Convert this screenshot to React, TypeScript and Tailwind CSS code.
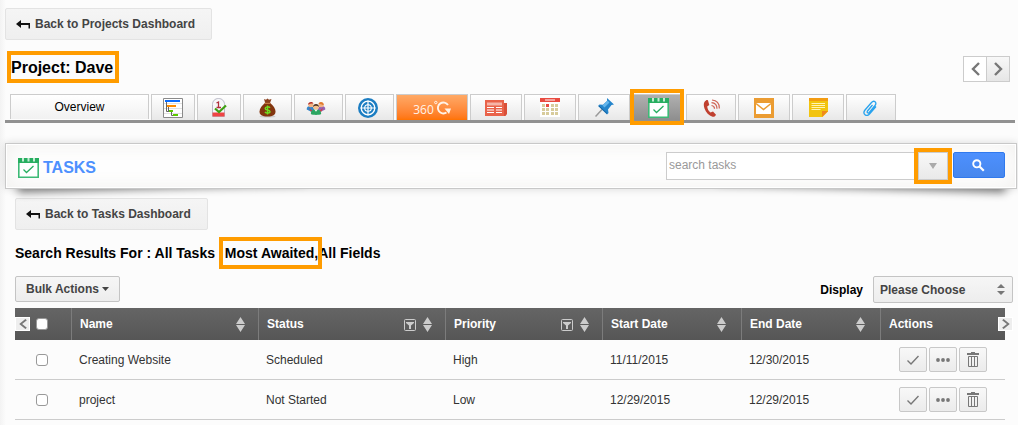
import type { ReactNode } from "react";
import { clsx } from "clsx";

type Tab = {
  label: string;
  width: string;
  icon: ReactNode;
  active?: boolean;
  orange?: boolean;
};

type Task = {
  name: string;
  status: string;
  priority: string;
  startDate: string;
  endDate: string;
};

type Column = {
  label: string;
  className: string;
  filter?: boolean;
};

const tabs: Tab[] = [
  { label: "Gantt chart", width: "w-11", icon: <GanttIcon /> },
  { label: "Milestones", width: "w-11", icon: <MilestoneIcon /> },
  { label: "Budget", width: "w-[49px]", icon: <MoneyBagIcon /> },
  { label: "People", width: "w-[49px]", icon: <PeopleIcon /> },
  { label: "Targets", width: "w-[49px]", icon: <TargetIcon /> },
  { label: "360 view", width: "w-[72px]", icon: <ThreeSixty />, orange: true },
  { label: "News", width: "w-[52px]", icon: <NewsIcon /> },
  { label: "Calendar", width: "w-[52px]", icon: <CalendarIcon /> },
  { label: "Pins", width: "w-[52px]", icon: <PinIcon /> },
  { label: "Tasks", width: "w-[52px]", icon: <TaskIcon />, active: true },
  { label: "Calls", width: "w-[50px]", icon: <PhoneIcon /> },
  { label: "Emails", width: "w-[52px]", icon: <MailIcon /> },
  { label: "Notes", width: "w-[52px]", icon: <NoteIcon /> },
  { label: "Documents", width: "w-[50px]", icon: <ClipIcon /> },
];

const columns: Column[] = [
  { label: "Name", className: "pr-[13px]" },
  { label: "Status", className: "w-[187px] pr-[13px]", filter: true },
  { label: "Priority", className: "w-[157px] pr-[13px]", filter: true },
  { label: "Start Date", className: "w-[139px] pr-[15px]" },
  { label: "End Date", className: "w-[139px] pr-[15px]" },
];

const tasks: Task[] = [
  {
    name: "Creating Website",
    status: "Scheduled",
    priority: "High",
    startDate: "11/11/2015",
    endDate: "12/30/2015",
  },
  {
    name: "project",
    status: "Not Started",
    priority: "Low",
    startDate: "12/29/2015",
    endDate: "12/29/2015",
  },
];

export default function App() {
  return (
    <main className="bg-[linear-gradient(to_right,#f3f3f3,#fcfcfc_6px)] pt-2 pb-1.5 pl-[5px] font-['Liberation_Sans',Arial,sans-serif] text-xs text-[#333]">
      <BackLink label="Back to Projects Dashboard" />

      <header className="mt-[11px] flex items-center justify-between pr-2 pl-0.5">
        <h1 className="h-8 border-4 border-[#ff9c00] pr-0.5 text-base leading-[26px] font-bold text-black">
          Project: Dave
        </h1>
        <div className="mt-1 flex h-[26px] border border-[#ccc]">
          <button
            type="button"
            aria-label="Previous project"
            className="flex w-[22px] items-center justify-center bg-white"
          >
            <Chevron />
          </button>
          <button
            type="button"
            aria-label="Next project"
            className="flex w-[23px] items-center justify-center border-l border-[#ccc] bg-linear-to-b from-[#f8f8f8] to-[#e6e6e6]"
          >
            <Chevron right />
          </button>
        </div>
      </header>

      <nav className="mt-[11px] mr-[3px] flex gap-0.5 border-b-[3px] border-[#919191] pl-[5px]">
        <a
          href="#overview"
          className="mb-px flex h-[25px] w-[139px] items-center justify-center border border-b-0 border-[#ccc] bg-linear-to-b from-white to-[#f1f1f1] text-black"
        >
          Overview
        </a>
        {tabs.map((tab) => (
          <TabLink key={tab.label} tab={tab} />
        ))}
      </nav>

      <TasksPanel />

      <div className="pt-[9px] pr-[5px] pl-2.5">
        <BackLink label="Back to Tasks Dashboard" />

        <h3 className="mt-[13px] text-sm leading-5 font-bold text-black">
          Search Results For : All Tasks{" "}
          <span className="relative ml-1.5">
            Most Awaited,
            <span className="absolute -top-2 -right-1 -bottom-2 -left-1.5 border-4 border-[#ff9c00]" />
          </span>
          All Fields
        </h3>

        <div className="mt-[13px] flex items-start justify-between">
          <button
            type="button"
            className="flex h-[26px] items-center gap-[3px] rounded-xs border border-[#c4c4c4] bg-linear-to-b from-[#f6f6f6] to-[#ededed] px-2.5 font-bold text-[#444]"
          >
            Bulk Actions
            <svg width="7" height="4" viewBox="0 0 7 4" fill="#444">
              <path d="M0 0h7L3.5 4z" />
            </svg>
          </button>
          <div className="flex items-center gap-2.5">
            <label htmlFor="display" className="font-bold text-black">
              Display
            </label>
            <div className="relative">
              <select
                id="display"
                className="block h-[27px] w-[140px] appearance-none rounded-xs border border-[#c4c4c4] bg-linear-to-b from-[#f6f6f6] to-[#ededed] px-1.5 font-bold text-[#444]"
              >
                <option>Please Choose</option>
              </select>
              <svg
                className="pointer-events-none absolute top-2 right-2"
                width="8"
                height="11"
                viewBox="0 0 8 11"
                fill="#777"
              >
                <path d="M4 0l4 4H0zM4 11L0 7h8z" />
              </svg>
            </div>
          </div>
        </div>

        <TaskTable />
      </div>
    </main>
  );
}

function BackLink({ label }: { label: string }) {
  return (
    <a
      href="#dashboard"
      className="flex h-8 w-fit items-center gap-[5px] rounded-xs border border-[#e3e3e3] bg-linear-to-b from-[#f5f5f5] to-[#efefef] pr-4 pl-2.5 font-bold text-[#444]"
    >
      <svg width="14" height="9" viewBox="0 0 14 9" fill="#111">
        <path d="M0 4L5 0v3h9v5.500h-1.500V5H5v3z" />
      </svg>
      {label}
    </a>
  );
}

function TabLink({ tab }: { tab: Tab }) {
  return (
    <a
      href="#tab"
      aria-label={tab.label}
      className={clsx(
        "relative flex h-[26px] items-center justify-center border border-b-0 border-[#ccc] bg-linear-to-b",
        tab.width,
        tab.active && "from-[#b0b0b0] to-[#8e8e8e]",
        tab.orange && "from-[#ffa965] to-[#ff7300]",
        !tab.active && !tab.orange && "from-white to-[#e8e8e8]",
      )}
    >
      {tab.icon}
      {tab.active && (
        <span className="absolute -top-1.5 -right-px -bottom-[5px] -left-[3px] border-4 border-[#ff9c00]" />
      )}
    </a>
  );
}

function TasksPanel() {
  return (
    <section className="relative isolate mt-5">
      <div className="absolute bottom-4 left-3 -z-10 h-5 w-72 -rotate-2 shadow-[0_15px_8px_#888]" />
      <div className="absolute right-3 bottom-4 -z-10 h-5 w-72 rotate-2 shadow-[0_15px_8px_#888]" />
      <div className="mr-px flex h-[46px] items-center justify-between border border-[#c8c8c8] bg-white pr-[11px] pl-3 shadow-[0_0_8px_rgba(0,0,0,0.14),inset_0_0_0_1px_#fff,inset_0_0_24px_rgba(90,80,50,0.09)]">
        <h2 className="flex items-center gap-1 pt-1 text-base font-bold text-[#4d90fe]">
          <TaskIcon />
          TASKS
        </h2>
        <form className="flex items-start gap-[5px]">
          <div className="relative flex h-7 border border-[#ccc] bg-white">
            <input
              type="text"
              aria-label="search tasks"
              placeholder="search tasks"
              className="w-[251px] px-0.5 pb-0.5 outline-none placeholder:text-[#999]"
            />
            <button
              type="button"
              aria-label="Search options"
              className="flex w-[29px] items-center justify-center border-l border-[#ccc] bg-linear-to-b from-[#f8f8f8] to-[#e9e9e9]"
            >
              <svg width="8" height="6" viewBox="0 0 8 6" fill="#aaa">
                <path d="M0 0h8L4 6z" />
              </svg>
            </button>
            <span className="pointer-events-none absolute -top-[5px] -right-[5px] -bottom-[5px] w-[38px] border-4 border-[#ff9c00]" />
          </div>
          <button
            type="button"
            aria-label="Search"
            className="flex h-[26px] w-[52px] items-center justify-center rounded-xs border border-[#3079ed] bg-linear-to-b from-[#4d90fe] to-[#4787ed] pr-0.5"
          >
            <svg width="13" height="13" viewBox="0 0 13 13" fill="none" stroke="#fff">
              <circle cx="4.800" cy="4.800" r="3.600" strokeWidth="1.900" />
              <path d="M7.500 7.500l4.300 4.300" strokeWidth="2.200" />
            </svg>
          </button>
        </form>
      </div>
    </section>
  );
}

function TaskTable() {
  return (
    <div className="relative mt-[5px] mr-2">
      <table className="w-full table-fixed border-separate border-spacing-0 text-left">
        <thead>
          <tr className="h-8 bg-linear-to-b from-[#656565] to-[#565656] text-white">
            <th className="w-14 p-0 pl-[21px]">
              <Checkbox label="Select all tasks" />
            </th>
            {columns.map((column) => (
              <th
                key={column.label}
                className={clsx("border-l border-[#7c7c7c] py-0 pl-2", column.className)}
              >
                <div className="flex items-center gap-[7px]">
                  <span className="grow">{column.label}</span>
                  {column.filter && <FilterIcon />}
                  <SortIcon />
                </div>
              </th>
            ))}
            <th className="w-[125px] border-l border-[#7c7c7c] py-0 pl-2">Actions</th>
          </tr>
        </thead>
        <tbody className="[&_td]:border-b [&_td]:border-[#ccc]">
          {tasks.map((task) => (
            <tr key={task.name} className="h-10">
              <td className="p-0 pl-[21px]">
                <Checkbox label={`Select ${task.name}`} />
              </td>
              <td className="py-0 pl-2">{task.name}</td>
              <td className="py-0 pl-2">{task.status}</td>
              <td className="py-0 pl-2">{task.priority}</td>
              <td className="py-0 pl-2">{task.startDate}</td>
              <td className="py-0 pl-2">{task.endDate}</td>
              <td className="p-0">
                <div className="flex justify-end gap-0.5 pr-[18px]">
                  <ActionButton label="Complete task">
                    <svg width="12" height="10" viewBox="0 0 12 10" fill="none" stroke="#777" strokeWidth="1.400">
                      <path d="M.5 5.500L4 9 11.500 1" />
                    </svg>
                  </ActionButton>
                  <ActionButton label="More actions">
                    <svg width="14" height="4" viewBox="0 0 14 4" fill="#777">
                      <circle cx="2" cy="2" r="1.900" />
                      <circle cx="7" cy="2" r="1.900" />
                      <circle cx="12" cy="2" r="1.900" />
                    </svg>
                  </ActionButton>
                  <ActionButton label="Delete task">
                    <svg width="12" height="15" viewBox="0 0 12 15" fill="none" stroke="#777">
                      <path d="M4 .5h4M0 2h12" strokeWidth="1.800" />
                      <path d="M1.500 4.500h9v10h-9zM4.500 4.500v10M7.500 4.500v10" />
                    </svg>
                  </ActionButton>
                </div>
              </td>
            </tr>
          ))}
        </tbody>
      </table>

      <button
        type="button"
        aria-label="Scroll left"
        className="absolute top-[9px] left-0 flex h-3.5 w-[15px] items-center justify-center border border-white bg-[#eee]"
      >
        <Chevron small />
      </button>
      <button
        type="button"
        aria-label="Scroll right"
        className="absolute top-[9px] -right-2 flex h-3.5 w-[15px] items-center justify-center border border-white bg-[#eee]"
      >
        <Chevron small right />
      </button>
    </div>
  );
}

function Checkbox({ label }: { label: string }) {
  return (
    <input
      type="checkbox"
      aria-label={label}
      className="block size-3 appearance-none rounded-[3px] border border-[#999] bg-white"
    />
  );
}

function ActionButton({ label, children }: { label: string; children: ReactNode }) {
  return (
    <button
      type="button"
      aria-label={label}
      className="flex h-[25px] w-7 items-center justify-center rounded-xs border border-[#c8c8c8] bg-linear-to-b from-[#f8f8f8] to-[#ebebeb]"
    >
      {children}
    </button>
  );
}

function Chevron({ right, small }: { right?: boolean; small?: boolean }) {
  return (
    <svg
      width={small ? 8 : 9}
      height={small ? 10 : 14}
      viewBox="0 0 9 14"
      preserveAspectRatio="none"
      fill="none"
      stroke="#777"
      strokeWidth="2.400"
    >
      <path d={right ? "M1 1l6 6-6 6" : "M8 1L2 7l6 6"} />
    </svg>
  );
}

function SortIcon() {
  return (
    <svg className="shrink-0" width="9" height="15" viewBox="0 0 9 15" fill="#ccc">
      <path d="M4.500 0L9 7H0zM4.500 15L0 8h9z" />
    </svg>
  );
}

function FilterIcon() {
  return (
    <svg className="mt-0.5 shrink-0" width="12" height="12" viewBox="0 0 12 12">
      <rect x=".5" y=".5" width="11" height="11" rx="1" fill="none" stroke="#ccc" />
      <path d="M2 3h8v1L7 6.500V10H5V6.500L2 4z" fill="#ccc" />
    </svg>
  );
}

function TaskIcon() {
  return (
    <svg width="21" height="20" viewBox="0 0 21 20">
      <path d="M.8 2h19.400v17.200H.8z" fill="#fff" stroke="#3dba76" strokeWidth="1.600" />
      <path d="M0 0h21v5H0z" fill="#27ae60" />
      <path d="M4 0h2v3.500H4zM9.500 0h2v3.500h-2zM15 0h2v3.500h-2z" fill="#c3ecd4" />
      <path d="M5.500 11.500l3 3 7-6.500" fill="none" stroke="#27ae60" strokeWidth="1.300" />
    </svg>
  );
}

function GanttIcon() {
  return (
    <svg width="20" height="20" viewBox="0 0 20 20">
      <path d="M.5.5h19v19H.5z" fill="#fff" stroke="#8a8a8a" />
      <path d="M1 5.500h18M1 10.500h18M1 15.500h18" stroke="#e2e2e2" />
      <path d="M3.500 4v9.500H6M5.500 9v4.500M8.500 14v3.500H10" fill="none" stroke="#666" />
      <path d="M2 2h15v2H2z" fill="#0a6cff" />
      <path d="M4 7h9v2H4z" fill="#ff8c00" />
      <path d="M6 12h4v2H6zM10 16h5v2h-5z" fill="#5cc800" />
    </svg>
  );
}

function MilestoneIcon() {
  return (
    <svg width="15" height="19" viewBox="0 0 15 19">
      <path d="M.5 18.500V6.500C.5 3 3 .5 6.500.5S12.500 3 12.500 6.500v12z" fill="#f6f6f9" stroke="#b9b9c6" />
      <path d="M.5 14.500h12v4H.5z" fill="#ef4444" />
      <path d="M4.500 5l2-1v5.500M4.500 9.500h4.500" fill="none" stroke="#b0303c" strokeWidth="1.300" />
      <path d="M3 10.500l4 3.500 7-6.500" fill="none" stroke="#3da012" strokeWidth="2.200" />
    </svg>
  );
}

function MoneyBagIcon() {
  return (
    <svg width="17" height="20" viewBox="0 0 17 20">
      <ellipse cx="8.500" cy="18.500" rx="8" ry="1" fill="#ccc" />
      <path d="M5 1l2 .8L8.500.5l1.500 1.300L12.500 1 11 5H6.200z" fill="#8b3f1c" />
      <path d="M6 5h5.200c3 2.500 5.300 5.500 5.300 8.500 0 3.500-2.500 5-8 5s-8-1.500-8-5C.5 10.500 3 7.500 6 5z" fill="#83350f" />
      <path d="M5.500 5.400h6" stroke="#c47a45" strokeWidth="1.200" />
      <path
        d="M11 9.800c-1-1.500-4.800-1.300-4.800.6 0 2.200 4.800 1 4.800 3.200 0 2-4 2-5 .3M8.500 7.500v9"
        fill="none"
        stroke="#6fe01f"
        strokeWidth="1.400"
      />
    </svg>
  );
}

function PeopleIcon() {
  return (
    <svg className="-ml-1.5" width="20" height="14" viewBox="0 0 20 15">
      <path d="M0 9c0-3 1.500-3.500 4-3.500S8 7 8 9.500L6 12z" fill="#3585c9" />
      <path d="M20 9c0-3-1.500-3.500-4-3.500S12 7 12 9.500l2 2.500z" fill="#9662b2" />
      <circle cx="4.500" cy="4" r="2.700" fill="#f1b283" />
      <path d="M1.500 4C1.500.5 7 .3 7.200 3 5.500 2.300 3.500 3 1.500 4z" fill="#b3302c" />
      <circle cx="15.500" cy="4" r="2.700" fill="#f1b283" />
      <path d="M12.700 3.500C13 0 18.500.5 18.300 4.500c-1.500-.3-3.600-2-5.600-1z" fill="#e07b2e" />
      <path d="M2.500 7.500l3.500 3-1.500 1zM17.500 7.500l-3.500 3 1.500 1z" fill="#d83b35" />
      <path d="M4.500 14c0-4 2-5 5.500-5s5.500 1 5.500 5c-2 1.300-9 1.300-11 0z" fill="#2ba560" />
      <circle cx="10" cy="6.500" r="3" fill="#f4c08d" />
      <path d="M6.800 6.500C6.800 2 13.200 2 13.200 6.500 11.500 5 9 4.500 6.800 6.500z" fill="#4a3428" />
      <path d="M8.500 9.500L10 11.500l1.500-2z" fill="#fff" />
    </svg>
  );
}

function TargetIcon() {
  return (
    <svg className="-ml-1" width="20" height="20" viewBox="0 0 20 20">
      <circle cx="10" cy="10" r="10" fill="#1b7dc2" />
      <g fill="none" stroke="#fff">
        <circle cx="10" cy="10" r="6.800" strokeWidth="1.300" />
        <circle cx="10" cy="10" r="3.300" strokeWidth="1.100" />
        <path d="M10 2.500v15M2.500 10h15" strokeWidth="1.200" />
      </g>
    </svg>
  );
}

function ThreeSixty() {
  return (
    <span className="flex items-center pt-1 font-['Open_Sans',sans-serif] text-xs text-[#fff3e8]">
      360
      <svg className="-mt-1" width="17" height="16" viewBox="0 0 17 16" fill="none" stroke="#fff3e8">
        <circle cx="1.800" cy="2.500" r="1.200" />
        <path d="M14 5A5.500 5.500 0 1 0 12.500 12.500" strokeWidth="1.900" />
        <path d="M10.500 8.500H17L15 14z" fill="#fff3e8" stroke="none" />
      </svg>
    </span>
  );
}

function NewsIcon() {
  return (
    <svg width="22" height="16" viewBox="0 0 22 16">
      <path d="M18 3h4v11l-1.500 2H18z" fill="#d94f38" />
      <path d="M0 0h19v16H0z" fill="#e9634a" />
      <path d="M2 2.500h15v3H2z" fill="#f6b5a8" />
      <path d="M2 7.500h7M11 7.500h6M2 10h7M11 10h6M2 12.500h7M11 12.500h6" stroke="#fff" strokeWidth="1.200" />
    </svg>
  );
}

function CalendarIcon() {
  return (
    <svg width="20" height="19" viewBox="0 0 20 19">
      <path d="M0 0h20v19H0z" fill="#fff" />
      <path d="M0 0h20v4H0z" fill="#e94b40" />
      <path d="M5 2h10" stroke="#fff" />
      <g stroke="#d8cc9c" strokeWidth="3">
        <path d="M2 7.500h3M6 7.500h3M11 7.500h3M15 7.500h3M2 11.500h3M6 11.500h3M11 11.500h3M15 11.500h3M2 15.500h3M6 15.500h3M11 15.500h3M15 15.500h3" />
      </g>
      <path d="M6 6h3v3H6z" fill="#e94b40" />
    </svg>
  );
}

function PinIcon() {
  return (
    <svg width="19" height="19" viewBox="0 0 19 19">
      <path d="M7.500 11L.5 18.500" stroke="#999" strokeWidth="1.500" />
      <path d="M12 0l7 6.500-2.500.5-3.500 4.500.5 3.500-1.500 1.500L3 8l1.500-1.500 3.500.3L12 3z" fill="#2585cb" />
      <path d="M12.500 2.500l2 2-5 5-2-2z" fill="#62b5ec" />
      <path d="M4 8l8 7.500" stroke="#15629f" />
    </svg>
  );
}

function PhoneIcon() {
  return (
    <svg width="17" height="18" viewBox="0 0 17 18">
      <path
        d="M3 1.500C.5 3 .3 6 1.500 9.500c1.300 4 4.500 7 8 8.200 1.500.4 3-.5 3.500-2l-3-3.200-2.500 1C5.500 12 4.500 10 4.200 7.500L6.300 6 5 1.500C4.500.9 3.700 1 3 1.500z"
        fill="#c0402f"
      />
      <g fill="none" stroke="#cf6354" strokeWidth="1.200">
        <path d="M8.500 6.500c2 .2 3 1.500 3 3.300" />
        <path d="M8.500 3.700c3.500.3 5.500 2.500 5.500 6" />
        <path d="M9 1c4.700.5 7.500 3.500 7.300 8.500" />
      </g>
    </svg>
  );
}

function MailIcon() {
  return (
    <svg width="20" height="20" viewBox="0 0 20 20">
      <path d="M0 0h20v20H0z" fill="#eb9c32" />
      <path d="M2 5h15v11H2z" fill="#fff" />
      <path d="M2 5.500l7.500 6 7.500-6" fill="none" stroke="#eb9c32" strokeWidth="1.600" />
    </svg>
  );
}

function NoteIcon() {
  return (
    <svg width="19" height="19" viewBox="0 0 19 19">
      <path d="M0 0h19v13.500L13.500 19H0z" fill="#f2c40f" />
      <path d="M0 0h19v3H0z" fill="#f39c12" />
      <path d="M13 13h6l-6 6z" fill="#f08a1c" />
      <path d="M2.500 5.500h13.500M2.500 7.500h13.500M2.500 9.500h13.500M2.500 11.500h9" stroke="#fff3b5" strokeWidth="1.200" />
    </svg>
  );
}

function ClipIcon() {
  return (
    <svg className="-ml-0.5" width="14" height="16" viewBox="0 0 14 16" fill="none" stroke="#29a3ee" strokeWidth="1.300">
      <path d="M9.500 5l-5 6c-1 1.500.7 2.700 1.800 1.500L12 5.500c2.300-3-1-5.800-3.500-3L2 10c-3 4 1.500 7.300 4.500 4L13 6.500" />
    </svg>
  );
}
